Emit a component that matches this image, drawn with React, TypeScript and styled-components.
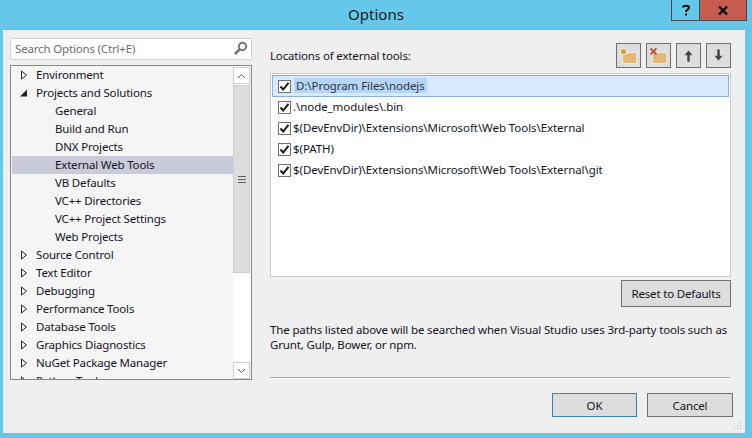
import { createGlobalStyle } from "styled-components";
import styled from "styled-components";

const GlobalStyle = createGlobalStyle`
  html, body {
    margin: 0;
    padding: 0;
    background: #65c8eb;
  }
  * {
    box-sizing: border-box;
  }
`;

const Window = styled.div`
  width: 752px;
  height: 438px;
  display: flex;
  flex-direction: column;
  background: #65c8eb;
  font-family: "Noto Sans", "Open Sans", sans-serif;
  font-size: 11.5px;
  letter-spacing: -0.17px;
  color: #14141e;
  overflow: hidden;
  position: relative;
`;

const TitleBar = styled.div`
  height: 29px;
  flex: none;
  display: flex;
  align-items: center;
  justify-content: center;
  padding-bottom: 2px;
  font-size: 15px;
  letter-spacing: 0;
  color: #1a1a1a;
`;

const CaptionButtons = styled.div`
  position: absolute;
  top: 0;
  right: 5px;
  display: flex;
`;

const CaptionButton = styled.div<{ $close?: boolean }>`
  width: ${(p) => (p.$close ? "47px" : "29px")};
  height: 21px;
  display: flex;
  align-items: center;
  justify-content: center;
  background: ${(p) => (p.$close ? "#c75b50" : "transparent")};
  border: 1px solid #3e4a50;
  border-top: none;
  border-left: ${(p) => (p.$close ? "none" : "1px solid #3e4a50")};
`;

const Panel = styled.div`
  flex: 1;
  margin: 0 7px 5px 3px;
  background: #efefef;
  border-top: 1px solid #9aa9b0;
  display: flex;
  padding: 8px 0 0 7px;
  position: relative;
`;

const LeftColumn = styled.div`
  width: 242px;
  flex: none;
  display: flex;
  flex-direction: column;
  gap: 5px;
`;

const SearchBox = styled.div`
  height: 22px;
  background: #fff;
  border: 1px solid #cfd0da;
  display: flex;
  align-items: center;
  justify-content: space-between;
  padding: 0 3px 2px 4px;
  color: #6d6d6d;
`;

const Tree = styled.div`
  height: 315px;
  border: 1px solid #828790;
  background: #f5f5f5;
  display: flex;
  overflow: hidden;
`;

const TreeRows = styled.div`
  flex: 1;
  overflow: hidden;
`;

const TreeRow = styled.div<{ $selected?: boolean; $child?: boolean }>`
  height: 18px;
  margin-left: 1px;
  display: flex;
  align-items: center;
  padding-left: ${(p) => (p.$child ? "43px" : "8px")};
  padding-bottom: 2px;
  background: ${(p) => (p.$selected ? "#c9cbda" : "transparent")};
  white-space: nowrap;
`;

const Expander = styled.svg`
  width: 8px;
  height: 10px;
  margin: 2px 8px 0 0;
  flex: none;
`;

const ScrollBar = styled.div`
  width: 17px;
  margin-right: 1px;
  flex: none;
  display: flex;
  flex-direction: column;
  background: #fff;
  padding-top: 1px;
`;

const ScrollArrow = styled.div`
  height: 17px;
  flex: none;
  background: #fff;
  border: 1px solid #cfcfcf;
  display: flex;
  align-items: center;
  justify-content: center;
`;

const ScrollThumb = styled.div`
  height: 188px;
  margin-top: 1px;
  flex: none;
  background: #dcdcdc;
  border: 1px solid #d0d0d0;
  display: flex;
  align-items: center;
  justify-content: center;
`;

const ScrollTrack = styled.div`
  flex: 1;
`;

const RightColumn = styled.div`
  width: 463px;
  margin-left: 18px;
  display: flex;
  flex-direction: column;
`;

const ListHeader = styled.div`
  height: 24px;
  margin-top: 5px;
  margin-right: 2px;
  display: flex;
  align-items: center;
  justify-content: space-between;
`;

const ListActions = styled.div`
  display: flex;
  gap: 5px;
`;

const IconButton = styled.div`
  width: 25px;
  height: 25px;
  background: #dddddd;
  border: 1px solid #707070;
  display: flex;
  align-items: center;
  justify-content: center;
`;

const PathList = styled.div`
  height: 204px;
  margin-top: 6px;
  margin-right: 2px;
  background: #fff;
  border: 1px solid #cbcbcb;
  padding: 1px;
`;

const PathRow = styled.div<{ $active?: boolean }>`
  height: ${(p) => (p.$active ? "22px" : "21px")};
  display: flex;
  align-items: center;
  padding-left: ${(p) => (p.$active ? "5px" : "6px")};
  background: ${(p) => (p.$active ? "#d9e9fc" : "transparent")};
  border: ${(p) => (p.$active ? "1px solid #8ab2e0" : "none")};
  white-space: nowrap;
  letter-spacing: -0.07px;
`;

const PathText = styled.span`
  margin-bottom: 2px;
`;

const Check = styled.div`
  width: 13px;
  height: 13px;
  margin-right: 2px;
  flex: none;
  background: #fff;
  border: 1px solid #707070;
  display: flex;
  align-items: center;
  justify-content: center;
`;

const EditedPath = styled.span`
  background: #b4d5f8;
  padding: 0 2px;
  margin-left: 1px;
  color: #30343c;
`;

const PushButton = styled.div<{ $default?: boolean; $width: number }>`
  width: ${(p) => p.$width}px;
  height: 24px;
  background: #dddddd;
  border: 1px solid ${(p) => (p.$default ? "#3c7fb1" : "#707070")};
  display: flex;
  align-items: center;
  justify-content: center;
`;

const ResetRow = styled.div`
  margin-top: 3px;
  margin-right: 2px;
  display: flex;
  justify-content: flex-end;
  & > div {
    height: 27px;
  }
`;

const Note = styled.p`
  margin: 15px 0 0;
  line-height: 15px;
  white-space: nowrap;
  letter-spacing: -0.14px;
`;

const Divider = styled.div`
  height: 1px;
  margin-top: 25px;
  margin-right: 3px;
  background: #a8a8a8;
  box-shadow: 0 1px 0 #fff;
`;

const DialogButtons = styled.div`
  margin-top: 15px;
  display: flex;
  justify-content: flex-end;
  gap: 10px;
`;

const Grip = styled.svg`
  position: absolute;
  right: 3px;
  bottom: 3px;
  width: 8px;
  height: 8px;
`;

const SearchIcon = () => (
  <svg width="15" height="15" viewBox="0 0 15 15">
    <circle cx="9.5" cy="5.5" r="3.7" fill="none" stroke="#717171" strokeWidth="2" />
    <path d="M6.6 8.4 2 13" stroke="#717171" strokeWidth="2.6" />
  </svg>
);

const Collapsed = () => (
  <Expander viewBox="0 0 8 10">
    <path d="M1.5 1v8L6.5 5z" fill="#fff" stroke="#222" />
  </Expander>
);

const Opened = () => (
  <Expander viewBox="0 0 8 10">
    <path d="M0 8.5h7v-7z" fill="#222" />
  </Expander>
);

const FolderIcon = ({ remove }: { remove?: boolean }) => (
  <svg width="19" height="17" viewBox="0 0 19 17">
    <path d="M3 6h5l1-1h8.500v12H3z" fill="#f2eee6" />
    <path d="M4 7h4.500l1-1H17v10H4z" fill="#e3b872" />
    {remove ? (
      <path d="M1.500 1.500l6 6M7.500 1.500l-6 6" stroke="#c0503c" strokeWidth="1.800" />
    ) : (
      <>
        <circle cx="4.500" cy="4.500" r="3.800" fill="#f3e6cb" />
        <circle cx="4.500" cy="4.500" r="2.500" fill="#dc9c3c" />
      </>
    )}
  </svg>
);

const ArrowIcon = ({ down }: { down?: boolean }) => (
  <svg width="13" height="15" viewBox="0 0 13 15">
    <g transform={down ? "rotate(180 6.500 7.500)" : undefined}>
      <path d="M6.500 2 2 7.500h3V14h3V7.500h3z" fill="#444" stroke="#f0f0f0" strokeWidth="0.500" />
    </g>
  </svg>
);

const Chevron = ({ down }: { down?: boolean }) => (
  <svg width="9" height="6" viewBox="0 0 9 6">
    <path d={down ? "M1 1l3.500 3.500L8 1" : "M1 5l3.500-3.500L8 5"} fill="none" stroke="#666" />
  </svg>
);

const treeItems = [
  { label: "Environment" },
  { label: "Projects and Solutions", open: true },
  { label: "General", child: true },
  { label: "Build and Run", child: true },
  { label: "DNX Projects", child: true },
  { label: "External Web Tools", child: true, selected: true },
  { label: "VB Defaults", child: true },
  { label: "VC++ Directories", child: true },
  { label: "VC++ Project Settings", child: true },
  { label: "Web Projects", child: true },
  { label: "Source Control" },
  { label: "Text Editor" },
  { label: "Debugging" },
  { label: "Performance Tools" },
  { label: "Database Tools" },
  { label: "Graphics Diagnostics" },
  { label: "NuGet Package Manager" },
  { label: "Python Tools" },
];

const paths = [
  "D:\\Program Files\\nodejs",
  ".\\node_modules\\.bin",
  "$(DevEnvDir)\\Extensions\\Microsoft\\Web Tools\\External",
  "$(PATH)",
  "$(DevEnvDir)\\Extensions\\Microsoft\\Web Tools\\External\\git",
];

const CheckMark = () => (
  <Check>
    <svg width="11" height="11" viewBox="0 0 11 11">
      <path d="M1.500 5.500 4.200 8.500 9.500 1.800" fill="none" stroke="#1a1a1a" strokeWidth="2" />
    </svg>
  </Check>
);

export default function App() {
  return (
    <>
      <GlobalStyle />
      <Window>
        <TitleBar>Options</TitleBar>
        <CaptionButtons>
          <CaptionButton>
            <svg width="10" height="12" viewBox="0 0 10 12">
              <path d="M2 3.500C2 1 8 1 8 3.500 8 5.500 5 5.500 5 8" fill="none" stroke="#000" strokeWidth="2" />
              <rect x="4" y="9.500" width="2" height="2" fill="#000" />
            </svg>
          </CaptionButton>
          <CaptionButton $close>
            <svg width="10" height="9" viewBox="0 0 10 9">
              <path d="M1 0.500l8 8M9 0.500l-8 8" stroke="#000" strokeWidth="2.200" />
            </svg>
          </CaptionButton>
        </CaptionButtons>
        <Panel>
          <LeftColumn>
            <SearchBox>
              Search Options (Ctrl+E)
              <SearchIcon />
            </SearchBox>
            <Tree>
              <TreeRows>
                {treeItems.map((item) => (
                  <TreeRow key={item.label} $child={item.child} $selected={item.selected}>
                    {!item.child && (item.open ? <Opened /> : <Collapsed />)}
                    {item.label}
                  </TreeRow>
                ))}
              </TreeRows>
              <ScrollBar>
                <ScrollArrow>
                  <Chevron />
                </ScrollArrow>
                <ScrollThumb>
                  <svg width="8" height="7" viewBox="0 0 8 7">
                    <path d="M0 .5h8M0 3.500h8M0 6.500h8" stroke="#606060" />
                  </svg>
                </ScrollThumb>
                <ScrollTrack />
                <ScrollArrow>
                  <Chevron down />
                </ScrollArrow>
              </ScrollBar>
            </Tree>
          </LeftColumn>
          <RightColumn>
            <ListHeader>
              Locations of external tools:
              <ListActions>
                <IconButton>
                  <FolderIcon />
                </IconButton>
                <IconButton>
                  <FolderIcon remove />
                </IconButton>
                <IconButton>
                  <ArrowIcon />
                </IconButton>
                <IconButton>
                  <ArrowIcon down />
                </IconButton>
              </ListActions>
            </ListHeader>
            <PathList>
              {paths.map((path, index) => (
                <PathRow key={path} $active={index === 0}>
                  <CheckMark />
                  <PathText>{index === 0 ? <EditedPath>{path}</EditedPath> : path}</PathText>
                </PathRow>
              ))}
            </PathList>
            <ResetRow>
              <PushButton $width={110}>Reset to Defaults</PushButton>
            </ResetRow>
            <Note>
              The paths listed above will be searched when Visual Studio uses 3rd-party tools such as
              <br />
              Grunt, Gulp, Bower, or npm.
            </Note>
            <Divider />
            <DialogButtons>
              <PushButton $default $width={85}>OK</PushButton>
              <PushButton $width={86}>Cancel</PushButton>
            </DialogButtons>
          </RightColumn>
          <Grip viewBox="0 0 8 8">
            <path d="M6 0h1v1H6zM3 3h1v1H3zM6 3h1v1H6zM0 6h1v1H0zM3 6h1v1H3zM6 6h1v1H6z" fill="#b0b0b0" />
          </Grip>
        </Panel>
      </Window>
    </>
  );
}
